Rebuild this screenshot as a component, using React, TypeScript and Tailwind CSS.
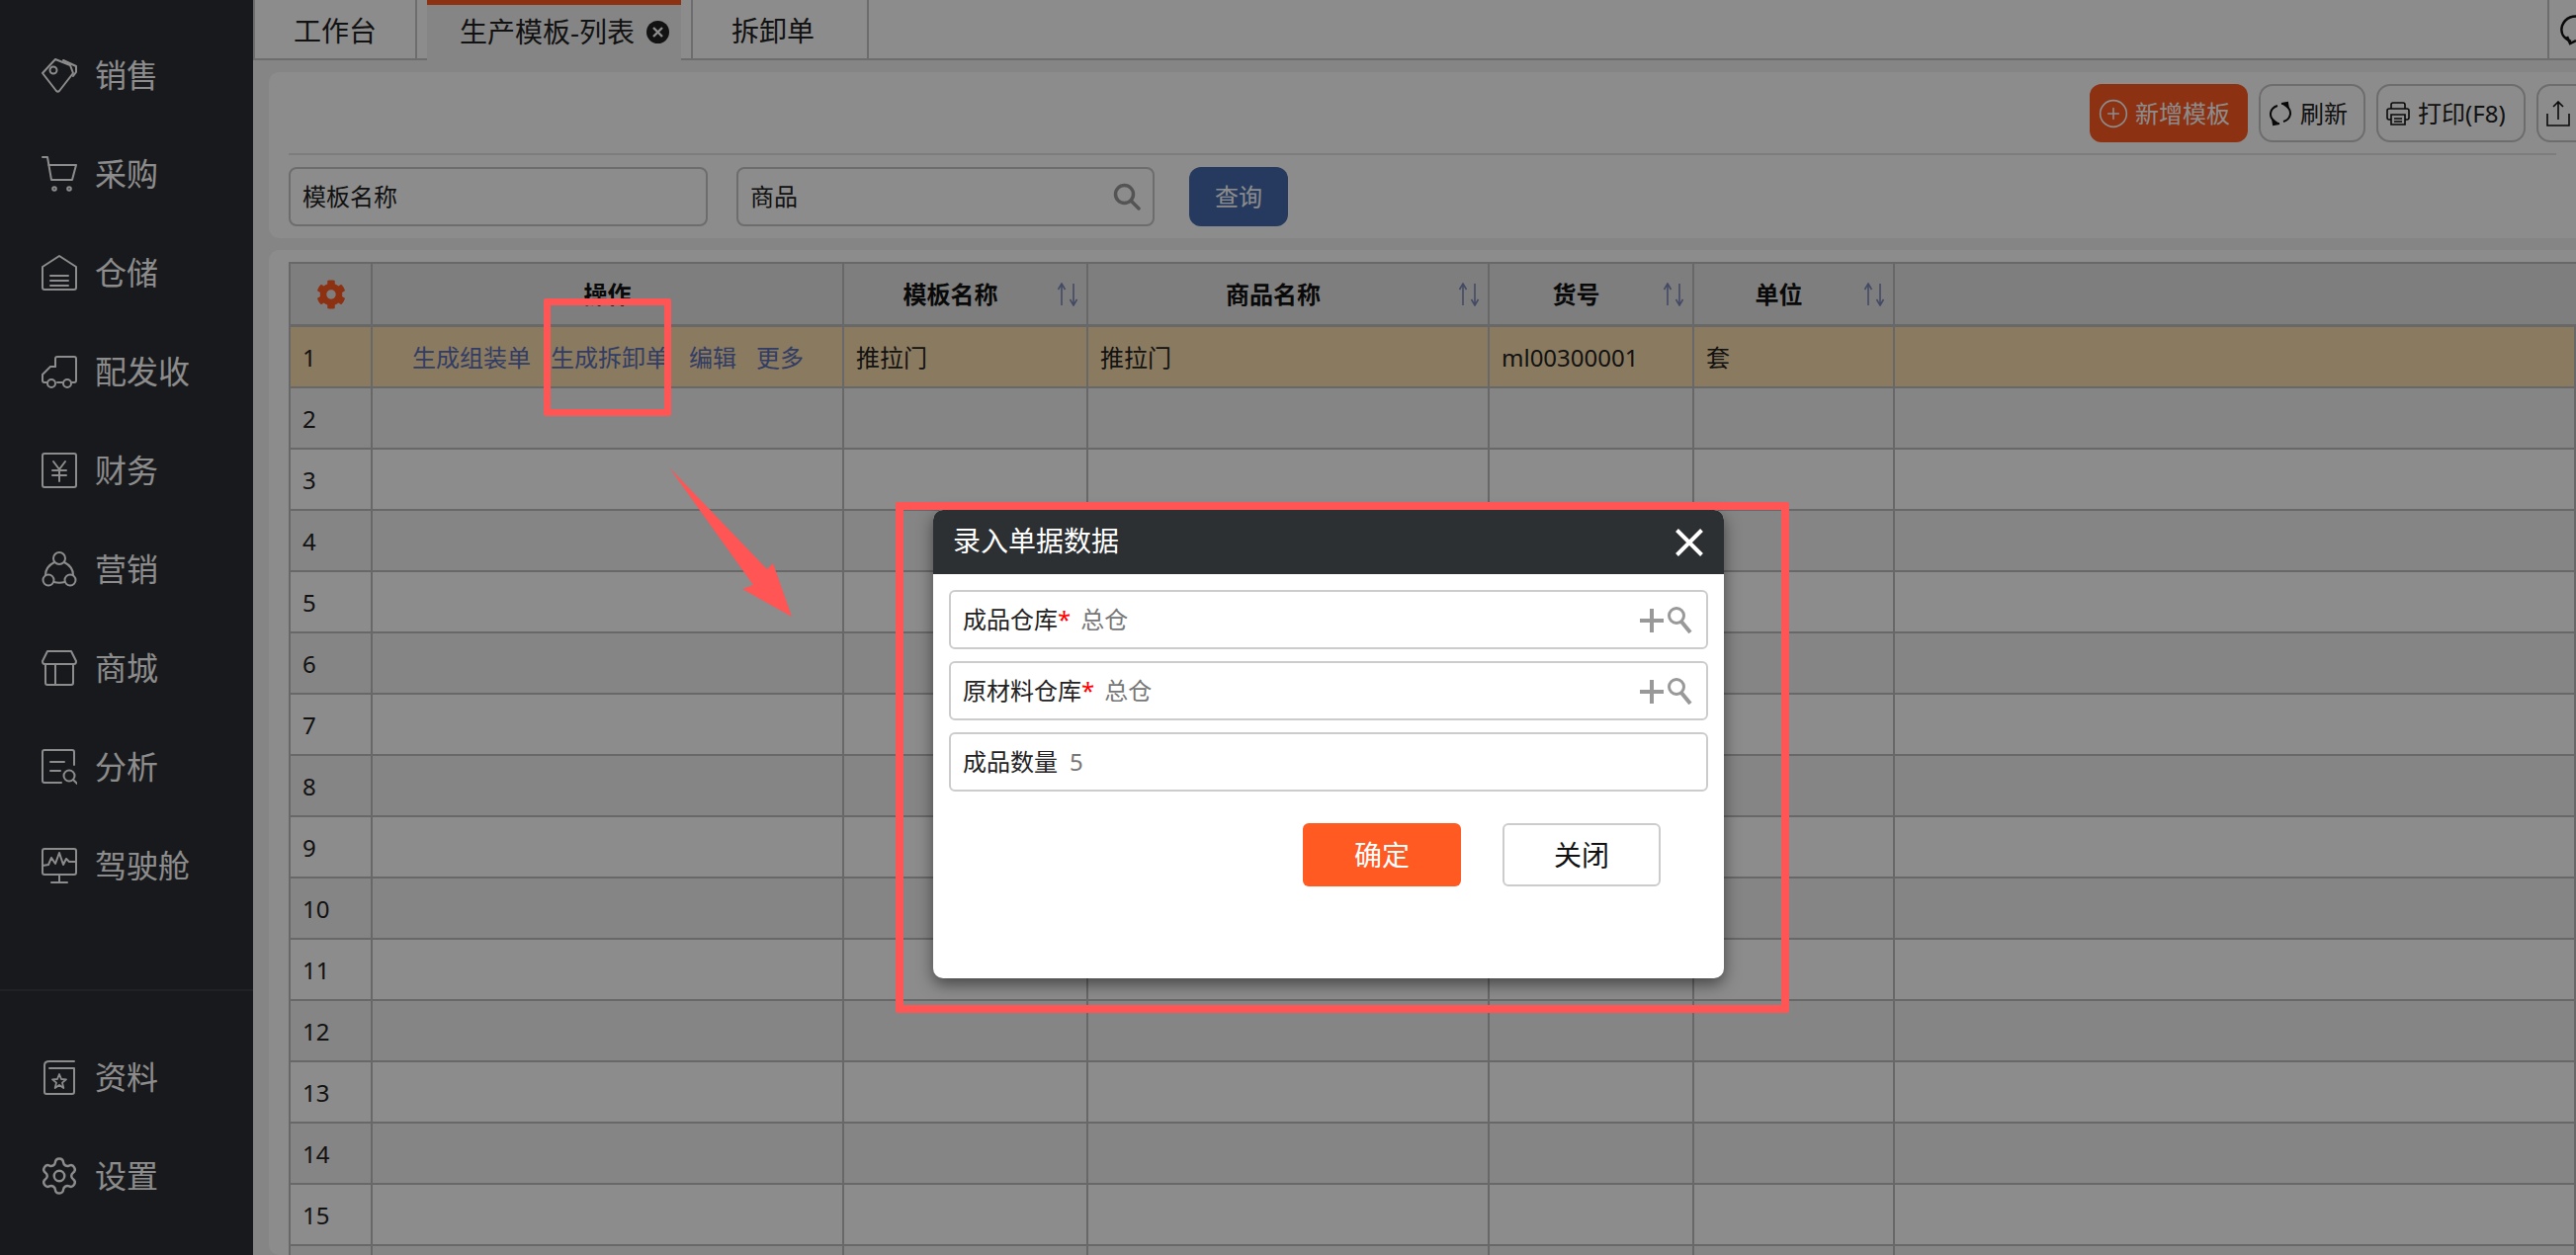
import { FC, ReactNode } from 'react';
import { CirclePlus, Settings } from 'lucide-react';
import { FaCog } from 'react-icons/fa';

const Icon: FC<{ children: ReactNode; className?: string; size?: number }> = ({ children, className = '', size = 36 }) => (
  <svg
    width={size}
    height={size}
    viewBox="0 0 36 36"
    fill="none"
    stroke="currentColor"
    strokeWidth="2"
    strokeLinecap="round"
    strokeLinejoin="round"
    className={`shrink-0 ${className}`}
  >
    {children}
  </svg>
);

const menuTop = [
  {
    label: '销售',
    icon: (
      <>
        <path d="M1 16 14 2 29 8l3 8-14 18c-1 1-2 1-3 0Z" />
        <path d="M22 3l13 6v6l-3 4" />
        <circle cx="12" cy="13" r="3.5" />
      </>
    ),
  },
  {
    label: '采购',
    icon: (
      <>
        <path d="M1 1h5l4 23h21l4-15H7" />
        <circle cx="13" cy="33" r="1.8" />
        <circle cx="28" cy="33" r="1.8" />
      </>
    ),
  },
  {
    label: '仓储',
    icon: (
      <>
        <path d="M1 12 18 1l17 11v21c0 1-1 2-2 2H3c-1 0-2-1-2-2Z" />
        <path d="M9 21h18M9 26h18M9 31h18" />
      </>
    ),
  },
  {
    label: '配发收',
    icon: (
      <>
        <path d="M14 13V5c0-1 1-2 2-2h17c1 0 2 1 2 2v22c0 1-1 2-2 2h-2" />
        <path d="M21 29h-5M5 29H3c-1 0-2-1-2-2v-6l8-8h5" />
        <circle cx="10" cy="30" r="4" />
        <circle cx="26" cy="30" r="4" />
      </>
    ),
  },
  {
    label: '财务',
    icon: (
      <>
        <rect x="1" y="1" width="34" height="34" rx="2" />
        <path d="M12 9l6 8 6-8M11 18h14M11 23h14M18 17v12" />
      </>
    ),
  },
  {
    label: '营销',
    icon: (
      <>
        <circle cx="18" cy="7" r="6" />
        <circle cx="7" cy="29" r="5.5" />
        <circle cx="29" cy="29" r="5.5" />
        <path d="M13 11C7 14 4 18 4 24M23 11c6 3 9 7 9 13M12.5 31c4 1 7 1 11 0" />
      </>
    ),
  },
  {
    label: '商城',
    icon: (
      <>
        <path d="M6 1h24l5 10c0 2-1 3-2 3H3c-1 0-2-1-2-3Z" />
        <path d="M4 14v19c0 1 1 2 2 2h24c1 0 2-1 2-2V14M14 14v21" />
      </>
    ),
  },
  {
    label: '分析',
    icon: (
      <>
        <path d="M33 16V3c0-1-1-2-2-2H3C2 1 1 2 1 3v29c0 1 1 2 2 2h17" />
        <path d="M9 13h14M9 22h10" />
        <circle cx="28" cy="27" r="5.5" />
        <path d="M32 31l4 4" />
      </>
    ),
  },
  {
    label: '驾驶舱',
    icon: (
      <>
        <rect x="1" y="1" width="34" height="26" rx="2" />
        <path d="M1 18l6-1 3-7 4 6 4-11 4 12 3-6 3 3h7M18 27v7M10 35h16" />
      </>
    ),
  },
];

const MenuItem: FC<{ label: string; icon: ReactNode }> = ({ label, icon }) => (
  <div className="flex h-[100px] items-center pl-[42px] text-[32px] text-white">
    {icon}
    <span className="ml-[18px] leading-none">{label}</span>
  </div>
);

const Sidebar = () => (
  <aside className="flex h-full w-[256px] shrink-0 flex-col bg-[#2c2e33]">
    <div className="pt-[26px]">
      {menuTop.map((m) => (
        <MenuItem key={m.label} label={m.label} icon={<Icon>{m.icon}</Icon>} />
      ))}
    </div>
    <div className="mt-auto h-[269px] border-t-2 border-[#3a3c41] pt-[37px]">
      <MenuItem
        label="资料"
        icon={
          <Icon>
            <path d="M33 2H8C5 2 3 3 3 6v27c0 1 1 2 2 2h26c1 0 2-1 2-2V9H8" />
            <path d="M18 15l2 5 5 .4-4 3.200 1.300 5.400-4.300-3-4.300 3 1.300-5.400-4-3.200 5-.4Z" strokeWidth="1.800" />
          </Icon>
        }
      />
      <MenuItem
        label="设置"
        icon={
          <span className="flex w-[36px] shrink-0 justify-center">
            <Settings size={42} strokeWidth={1.4} className="-mx-[3px] shrink-0" />
          </span>
        }
      />
    </div>
  </aside>
);

const TabBar = () => (
  <div className="flex h-[61px] shrink-0 border-b-2 border-l-2 border-[#c6c6c6] bg-white text-[28px] text-[#222]">
    <div className="flex w-[164px] items-center justify-center border-r-2 border-[#c6c6c6] pt-[2px]">工作台</div>
    <div className="-mb-[2px] ml-[10px] flex h-[61px] w-[257px] items-center border-t-[5px] border-[#ff5a22] bg-[#f2f2f2] pb-[2px] pl-[33px]">
      <span>生产模板-列表</span>
      <span className="ml-[12px] flex h-[23px] w-[23px] items-center justify-center rounded-full bg-[#222]">
        <svg width="11" height="11" viewBox="0 0 11 11" stroke="#fff" strokeWidth="2.400">
          <path d="M1 1l9 9M10 1l-9 9" />
        </svg>
      </span>
    </div>
    <div className="ml-[10px] flex w-[180px] items-center border-x-2 border-[#c6c6c6] pl-[39px] pt-[2px]">拆卸单</div>
    <div className="ml-auto flex w-[29px] items-center overflow-hidden border-l-2 border-[#c6c6c6] pl-[8px]">
      <svg width="36" height="36" viewBox="0 0 36 36" fill="none" stroke="#111" strokeWidth="2.500" className="shrink-0">
        <path d="M14 30C6 27 3 21 5 14 8 6 17 2 25 6s10 12 7 20" />
        <path d="M10 25l3 7 6-3" />
      </svg>
    </div>
  </div>
);

const OutlineButton: FC<{ children: ReactNode; className: string }> = ({ children, className }) => (
  <button className={`flex h-[59px] shrink-0 items-center gap-[8px] rounded-[14px] border-2 border-[#c6c6c6] pl-[8px] text-[24px] text-[#222] ${className}`}>
    {children}
  </button>
);

const Toolbar = () => (
  <section className="shrink-0 overflow-hidden rounded-l-[10px] bg-white px-[20px]">
    <div className="flex h-[84px] justify-end gap-[11px] border-b-2 border-[#e4e4e4] pt-[12px]">
      <button className="flex h-[59px] w-[160px] shrink-0 items-center gap-[6px] rounded-[12px] bg-[#ff5a22] pl-[8px] text-[24px] text-white">
        <CirclePlus size={32} strokeWidth={1.2} />
        新增模板
      </button>
      <OutlineButton className="w-[108px]">
        <svg width="24" height="26" viewBox="0 0 24 26" fill="none" stroke="#111" strokeWidth="2">
          <path d="M9 5C2 7-1 15 6 21" />
          <path d="M15 21c7-2 10-10 3-16" />
          <path d="M4 18l1 6 6-1M20 8l-1-6-6 1" fill="#111" />
        </svg>
        刷新
      </OutlineButton>
      <OutlineButton className="w-[151px]">
        <svg width="24" height="24" viewBox="0 0 24 24" fill="none" stroke="#111" strokeWidth="1.600">
          <path d="M5 7V3c0-1 1-2 2-2h10c1 0 2 1 2 2v4" />
          <path d="M5 18H3c-1 0-2-1-2-2V9c0-1 1-2 2-2h18c1 0 2 1 2 2v7c0 1-1 2-2 2h-2" />
          <path d="M5 13h14v10H5ZM8 17h8M8 20h8" />
        </svg>
        打印(F8)
      </OutlineButton>
      <div className="mr-[-87px]">
        <OutlineButton className="w-[107px]">
          <svg width="24" height="26" viewBox="0 0 24 26" fill="none" stroke="#111" strokeWidth="1.600">
            <path d="M1 13v12h22V13M12 19V1M7 6l5-5 5 5" />
          </svg>
        </OutlineButton>
      </div>
    </div>
    <div className="flex h-[84px] items-start pt-[12px] text-[24px] text-[#222]">
      <div className="flex h-[60px] w-[424px] items-center rounded-[8px] border-2 border-[#c6c6c6] pl-[12px]">模板名称</div>
      <div className="ml-[29px] flex h-[60px] w-[423px] items-center justify-between rounded-[8px] border-2 border-[#c6c6c6] pl-[12px] pr-[12px]">
        商品
        <svg width="28" height="28" viewBox="0 0 28 28" fill="none" stroke="#9a9a9a" strokeWidth="3.500" strokeLinecap="round">
          <circle cx="11.500" cy="11.500" r="9" />
          <path d="M18 18l8 8" />
        </svg>
      </div>
      <button className="ml-[35px] h-[60px] w-[100px] rounded-[12px] bg-[#456aad] text-white">查询</button>
    </div>
  </section>
);

const SortArrows = () => (
  <svg width="22" height="24" viewBox="0 0 22 24" fill="none" stroke="#7c88b8" strokeWidth="1.600" className="mr-[8px] shrink-0">
    <path d="M5 23V2M1.500 7 5 1l3.500 6M17 1v21M13.500 17l3.500 6 3.500-6" />
  </svg>
);

const cellClass = 'flex h-[62px] items-center border-b-2 border-r-2 border-[#bdbdbd] pt-[2px]';
const gridClass = 'grid grid-cols-[83px_477px_247px_406px_207px_203px_1fr]';

const headers = ['模板名称', '商品名称', '货号', '单位'];

const DataTable = () => (
  <div className="mt-[12px] min-h-0 flex-1 overflow-hidden rounded-l-[10px] bg-white pl-[20px] pt-[12px]">
    <div className="border-l-2 border-t-2 border-[#bdbdbd] text-[24px] text-[#222]">
      <div className={`${gridClass} h-[64px] bg-[#e5e5e5] font-bold text-[#111]`}>
        <div className="flex items-center justify-center border-b-[3px] border-r-2 border-[#bdbdbd] text-[#ff5a22]">
          <FaCog size={30} />
        </div>
        <div className="flex items-center justify-center border-b-[3px] border-r-2 border-[#bdbdbd]">操作</div>
        {headers.map((h) => (
          <div key={h} className="flex items-center border-b-[3px] border-r-2 border-[#bdbdbd]">
            <span className="flex-1 text-center">{h}</span>
            <SortArrows />
          </div>
        ))}
        <div className="border-b-[3px] border-[#bdbdbd]" />
      </div>
      <div className={`${gridClass} bg-[#fbdead]`}>
        <div className={`${cellClass} pl-[12px]`}>1</div>
        <div className={`${cellClass} gap-[20px] pl-[40px] text-[#5a6fb8]`}>
          <span>生成组装单</span>
          <span>生成拆卸单</span>
          <span>编辑</span>
          <span>更多</span>
        </div>
        <div className={`${cellClass} pl-[12px]`}>推拉门</div>
        <div className={`${cellClass} pl-[12px]`}>推拉门</div>
        <div className={`${cellClass} pl-[12px]`}>ml00300001</div>
        <div className={`${cellClass} pl-[12px]`}>套</div>
        <div className={`${cellClass} border-r-0`} />
      </div>
      {Array.from({ length: 15 }).map((_, i) => (
        <div key={i} className={`${gridClass} ${i % 2 === 0 ? 'bg-[#f2f2f2]' : 'bg-white'}`}>
          <div className={`${cellClass} pl-[12px]`}>{i < 14 ? i + 2 : ''}</div>
          <div className={cellClass} />
          <div className={cellClass} />
          <div className={cellClass} />
          <div className={cellClass} />
          <div className={cellClass} />
          <div className={`${cellClass} border-r-0`} />
        </div>
      ))}
    </div>
  </div>
);

const PickerIcons = () => (
  <svg width="54" height="28" viewBox="0 0 54 28" fill="none" stroke="#999" className="shrink-0">
    <path d="M0 15h24M12 3v24" strokeWidth="4" />
    <circle cx="37" cy="10" r="7.500" strokeWidth="3" />
    <path d="M42 16l9 11" strokeWidth="4" />
  </svg>
);

const Field: FC<{ label: string; value: string; required?: boolean; picker?: boolean }> = ({ label, value, required, picker }) => (
  <div className="flex h-[60px] items-center rounded-[6px] border-2 border-[#ccc] pl-[12px] pr-[13px] text-[24px] text-[#222]">
    <span>{label}</span>
    {required && <span className="text-[#f00]">*</span>}
    <span className={`text-[#777] ${required ? 'ml-[10px]' : 'ml-[12px]'}`}>{value}</span>
    {picker && (
      <span className="ml-auto">
        <PickerIcons />
      </span>
    )}
  </div>
);

const Dialog = () => (
  <div className="absolute left-[944px] top-[516px] h-[474px] w-[800px] overflow-hidden rounded-[10px] bg-white shadow-[0_6px_16px_rgba(0,0,0,0.5)]">
    <div className="flex h-[65px] items-center justify-between bg-[#2d3033] pl-[20px] pr-[21px] text-[28px] text-white">
      <span className="pb-[4px]">录入单据数据</span>
      <svg width="28" height="28" viewBox="0 0 28 28" stroke="#fff" strokeWidth="4">
        <path d="M1.500 1.500l25 25M26.500 1.500l-25 25" />
      </svg>
    </div>
    <div className="flex flex-col gap-[12px] px-[16px] pt-[16px]">
      <Field label="成品仓库" value="总仓" required picker />
      <Field label="原材料仓库" value="总仓" required picker />
      <Field label="成品数量" value="5" />
    </div>
    <div className="mt-[32px] flex justify-end gap-[42px] pr-[64px] text-[28px]">
      <button className="h-[64px] w-[160px] rounded-[6px] bg-[#ff5a22] text-white">确定</button>
      <button className="h-[64px] w-[160px] rounded-[6px] border-2 border-[#ccc] bg-white text-[#111]">关闭</button>
    </div>
  </div>
);

export default function App() {
  return (
    <div className="relative flex h-[1270px] w-[2606px] overflow-hidden bg-[#f2f2f2] font-['Noto_Sans','Noto_Sans_CJK_SC',sans-serif]">
      <Sidebar />
      <main className="flex h-full min-w-0 flex-1 flex-col">
        <TabBar />
        <div className="flex min-h-0 flex-1 flex-col pl-[16px] pt-[12px]">
          <Toolbar />
          <DataTable />
        </div>
      </main>

      <div className="absolute inset-0 bg-black/45" />
      <Dialog />

      <div className="absolute left-[550px] top-[302px] h-[119px] w-[129px] rounded-[2px] border-[7px] border-[#ff5555]" />
      <div className="absolute left-[906px] top-[508px] h-[517px] w-[904px] rounded-[2px] border-[8px] border-[#ff5555]" />
      <svg className="absolute left-[670px] top-[470px]" width="140" height="160" viewBox="0 0 140 160">
        <path d="M7 3 106 106 112 100 131 154 81 126 92 122Z" fill="#ff5555" />
      </svg>
    </div>
  );
}
